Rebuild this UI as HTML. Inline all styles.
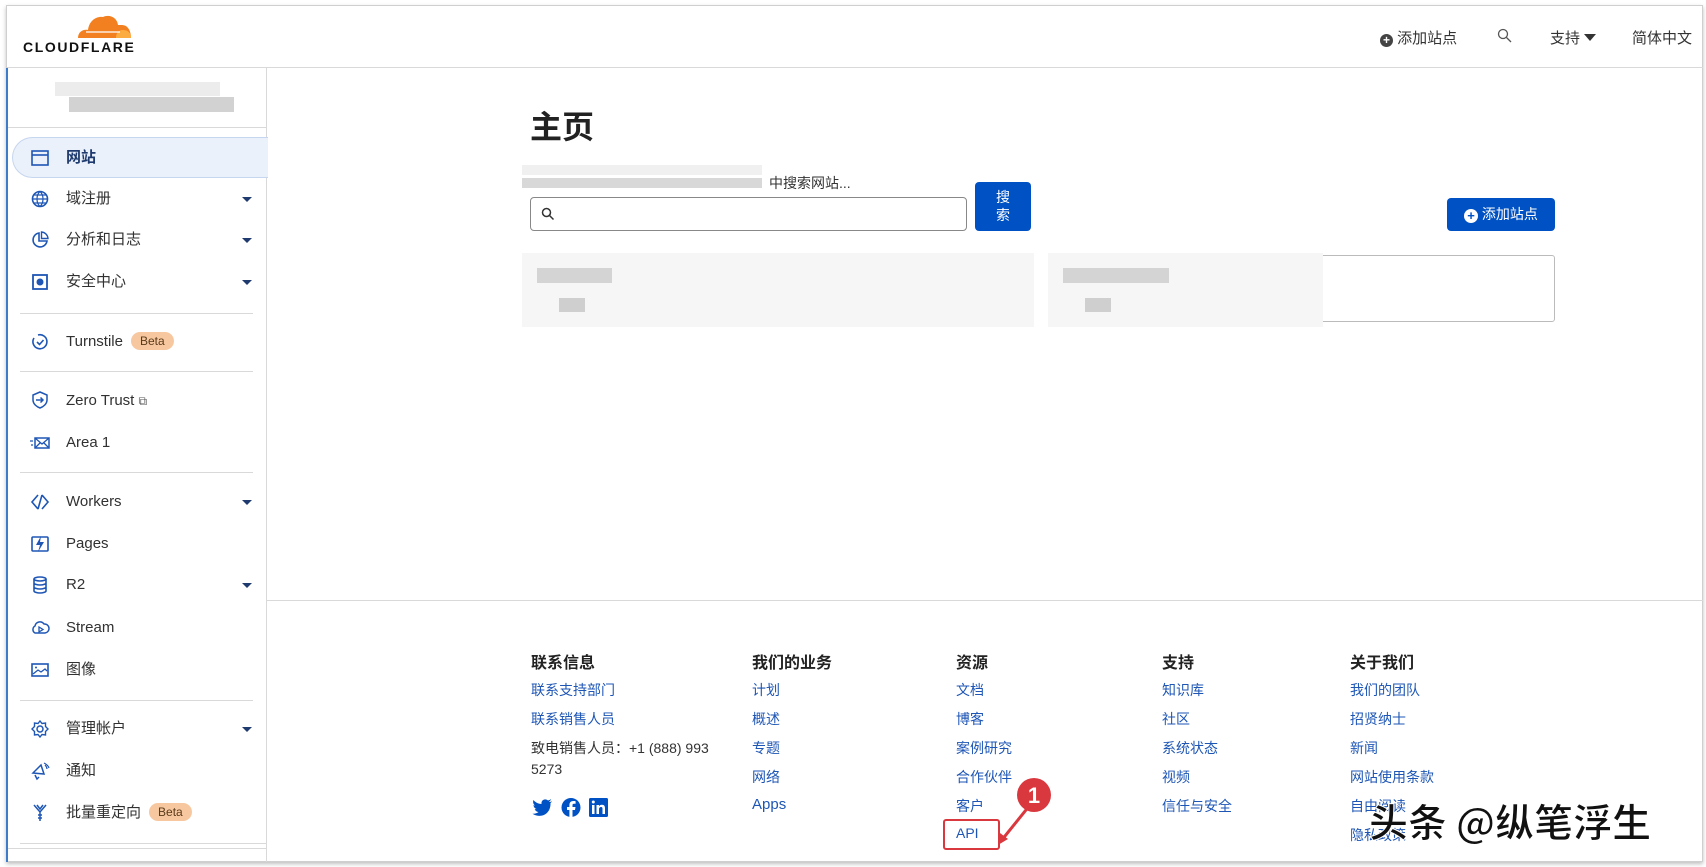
<!DOCTYPE html>
<html><head><meta charset="utf-8"><style>
*{margin:0;padding:0;box-sizing:border-box}
body{width:1706px;height:867px;background:#fff;position:relative;overflow:hidden;font-family:"Liberation Sans","Noto Sans CJK SC",sans-serif;color:#313131}
.a{position:absolute;white-space:nowrap}
.frame{position:absolute;left:6px;top:5px;width:1697px;height:857px;border:1px solid #cfcfcf;box-shadow:0 2px 4px rgba(0,0,0,.25)}
.hl{position:absolute;height:1px;background:#d9d9d9}
.nav{position:absolute;left:66px;font-size:15px;color:#313131;line-height:22px;height:22px}
.ic{position:absolute;left:30px;width:20px;height:20px}
.car{position:absolute;left:242px;width:0;height:0;border-left:5px solid transparent;border-right:5px solid transparent;border-top:5px solid #1e3a6e}
.beta{display:inline-block;background:#f7c8a0;color:#5a3a1a;font-size:12px;line-height:16px;border-radius:10px;padding:1px 9px;margin-left:8px;vertical-align:1px}
.fh{position:absolute;font-size:16px;font-weight:bold;color:#222}
.fl{position:absolute;font-size:14px;color:#1e56b5}
.blur{position:absolute;background:#e6e6e6}
</style></head><body>
<div class="frame"></div>
<!-- header -->
<svg class="a" style="left:76px;top:13px" width="56" height="26" viewBox="0 0 56 26"><path d="M2 25 C2 19 7 16 12 17 C13 8 20 3 27 4 C33 1 41 4 42 12 L46 12 C52 12 55 18 55 25 Z" fill="#f38020"/><path d="M40 25 C40 20 43 17 47 17 C52 17 55 20 55 25Z" fill="#fbad41"/><path d="M10 19 H44" stroke="#fff" stroke-width="1.3"/></svg>
<div class="a" style="left:23px;top:39px;font-size:14px;font-weight:bold;letter-spacing:1.6px;color:#111">CLOUDFLARE</div>
<div class="hl" style="left:7px;top:67px;width:1696px"></div>
<div class="a" style="left:1380px;top:27px;font-size:15px;color:#333"><span style="display:inline-block;width:13px;height:13px;border-radius:50%;background:#444;color:#fff;font-size:12px;line-height:12px;text-align:center;vertical-align:-1px;font-weight:bold">+</span> 添加站点</div>
<svg class="a" style="left:1497px;top:28px" width="16" height="16"><circle cx="6" cy="6" r="4.5" fill="none" stroke="#555" stroke-width="1.3"/><path d="M9.5 9.5 L14 14" stroke="#555" stroke-width="1.3"/></svg>
<div class="a" style="left:1550px;top:27px;font-size:15px;color:#333">支持 <span style="display:inline-block;border-left:6px solid transparent;border-right:6px solid transparent;border-top:7px solid #333;vertical-align:2px"></span></div>
<div class="a" style="left:1632px;top:27px;font-size:15px;color:#333">简体中文</div>
<!-- sidebar -->
<div class="a" style="left:6px;top:68px;width:2px;height:794px;background:#3d7cc9"></div>
<div class="a" style="left:266px;top:68px;width:1px;height:794px;background:#d9d9d9"></div>
<div class="blur" style="left:55px;top:82px;width:165px;height:14px;background:#ececec"></div>
<div class="blur" style="left:69px;top:97px;width:165px;height:15px;background:#d2d2d2"></div>
<div class="hl" style="left:8px;top:127px;width:258px"></div>
<div class="a" style="left:12px;top:137px;width:256px;height:41px;background:#eaf1fb;border:1px solid #c6d6ee;border-right:none;border-radius:21px 0 0 21px"></div>
<svg class="ic" style="top:148px" viewBox="0 0 20 20"><rect x="2" y="3" width="16" height="14" fill="none" stroke="#1e56b5" stroke-width="1.6"/><path d="M2 7 H18" stroke="#1e56b5" stroke-width="1.6"/></svg>
<div class="nav" style="top:147px;font-weight:bold;color:#1e3a6e">网站</div>
<svg class="ic" style="top:189px" viewBox="0 0 20 20"><circle cx="10" cy="10" r="7.5" fill="none" stroke="#1e56b5" stroke-width="1.6"/><path d="M2.5 10H17.5M10 2.5C6 6 6 14 10 17.5M10 2.5C14 6 14 14 10 17.5M4 6H16M4 14H16" stroke="#1e56b5" stroke-width="1.2" fill="none"/></svg>
<div class="nav" style="top:188px">域注册</div><div class="car" style="top:197px"></div>
<svg class="ic" style="top:230px" viewBox="0 0 20 20"><path d="M9 3 A7 7 0 1 0 17 11 H9 Z" fill="none" stroke="#1e56b5" stroke-width="1.6"/><path d="M11.5 2 A7 7 0 0 1 18 8.5 H11.5Z" fill="none" stroke="#1e56b5" stroke-width="1.4"/></svg>
<div class="nav" style="top:229px">分析和日志</div><div class="car" style="top:238px"></div>
<svg class="ic" style="top:272px" viewBox="0 0 20 20"><rect x="3" y="3" width="14" height="14" fill="none" stroke="#1e56b5" stroke-width="1.8"/><circle cx="10" cy="10" r="3.5" fill="#1e56b5"/></svg>
<div class="nav" style="top:271px">安全中心</div><div class="car" style="top:280px"></div>
<div class="hl" style="left:20px;top:313px;width:233px"></div>
<svg class="ic" style="top:332px" viewBox="0 0 20 20"><path d="M4 6 A7 7 0 1 0 8 3" fill="none" stroke="#1e56b5" stroke-width="1.6"/><path d="M7 10 L9.5 12.5 L13.5 8" fill="none" stroke="#1e56b5" stroke-width="1.6"/></svg>
<div class="nav" style="top:331px">Turnstile<span class="beta">Beta</span></div>
<div class="hl" style="left:20px;top:371px;width:233px"></div>
<svg class="ic" style="top:390px" viewBox="0 0 20 20"><path d="M10 2 L17 5 V10 C17 14 13 17 10 18 C7 17 3 14 3 10 V5 Z" fill="none" stroke="#1e56b5" stroke-width="1.5"/><path d="M6 10 H13 M10.5 7.5 L13 10 L10.5 12.5" fill="none" stroke="#1e56b5" stroke-width="1.5"/></svg>
<div class="nav" style="top:390px">Zero Trust <span style="font-size:12px;color:#555">⧉</span></div>
<svg class="ic" style="top:433px" viewBox="0 0 20 20"><rect x="5" y="5" width="14" height="10" fill="none" stroke="#1e56b5" stroke-width="1.5"/><path d="M5 5 L12 11 L19 5 M5 15 L10 10 M19 15 L14 10 M0 8H3M1 12H3" fill="none" stroke="#1e56b5" stroke-width="1.3"/></svg>
<div class="nav" style="top:432px">Area 1</div>
<div class="hl" style="left:20px;top:472px;width:233px"></div>
<svg class="ic" style="top:492px" viewBox="0 0 20 20"><path d="M8 3 L2 10 L8 17 M12 3 L18 10 L12 17 M12 3 L8 17" fill="none" stroke="#1e56b5" stroke-width="1.6"/></svg>
<div class="nav" style="top:491px">Workers</div><div class="car" style="top:500px"></div>
<svg class="ic" style="top:534px" viewBox="0 0 20 20"><rect x="2" y="3" width="16" height="14" rx="1" fill="none" stroke="#1e56b5" stroke-width="1.6"/><path d="M11 2 L6 11 H10 L8 18 L14 8 H10 Z" fill="#1e56b5"/></svg>
<div class="nav" style="top:533px">Pages</div>
<svg class="ic" style="top:575px" viewBox="0 0 20 20"><ellipse cx="10" cy="4" rx="6" ry="2" fill="none" stroke="#1e56b5" stroke-width="1.6"/><path d="M4 4V16C4 17 7 18 10 18S16 17 16 16V4M4 8C4 9 7 10 10 10S16 9 16 8M4 12C4 13 7 14 10 14S16 13 16 12" fill="none" stroke="#1e56b5" stroke-width="1.6"/></svg>
<div class="nav" style="top:574px">R2</div><div class="car" style="top:583px"></div>
<svg class="ic" style="top:618px" viewBox="0 0 20 20"><path d="M5 15 A4 4 0 0 1 5 8 A5 5 0 0 1 14 6 A4.5 4.5 0 0 1 15 15 Z" fill="none" stroke="#1e56b5" stroke-width="1.5"/><path d="M9 9 L13 11.5 L9 14 Z" fill="none" stroke="#1e56b5" stroke-width="1.3"/></svg>
<div class="nav" style="top:617px">Stream</div>
<svg class="ic" style="top:660px" viewBox="0 0 20 20"><rect x="2" y="4" width="16" height="12" fill="none" stroke="#1e56b5" stroke-width="1.6"/><path d="M3 14 L8 10 L11 12 L15 9 L17 11" fill="none" stroke="#1e56b5" stroke-width="1.3"/><circle cx="6" cy="7.5" r="1" fill="#1e56b5"/></svg>
<div class="nav" style="top:659px">图像</div>
<div class="hl" style="left:20px;top:700px;width:233px"></div>
<svg class="ic" style="top:719px" viewBox="0 0 20 20"><circle cx="10" cy="10" r="3" fill="none" stroke="#1e56b5" stroke-width="1.5"/><path d="M10 2 L12 4.5 L15.5 4 L15.5 7.5 L18 10 L15.5 12.5 L15.5 16 L12 15.5 L10 18 L8 15.5 L4.5 16 L4.5 12.5 L2 10 L4.5 7.5 L4.5 4 L8 4.5 Z" fill="none" stroke="#1e56b5" stroke-width="1.4"/></svg>
<div class="nav" style="top:718px">管理帐户</div><div class="car" style="top:727px"></div>
<svg class="ic" style="top:761px" viewBox="0 0 20 20"><path d="M3 12 L11 4 L14 13 Z M5 14 L7 18 L9 16" fill="none" stroke="#1e56b5" stroke-width="1.5"/><path d="M15 4 Q17 6 17 8 M14 2 Q18 4 19 7" fill="none" stroke="#1e56b5" stroke-width="1.2"/></svg>
<div class="nav" style="top:760px">通知</div>
<svg class="ic" style="top:803px" viewBox="0 0 20 20"><path d="M4 2 L10 9 L16 2 M7 2 L10 6 L13 2 M10 9 V18 M8 12 H12 M8 15 H12" fill="none" stroke="#1e56b5" stroke-width="1.5"/></svg>
<div class="nav" style="top:802px">批量重定向<span class="beta">Beta</span></div>
<div class="hl" style="left:20px;top:843px;width:246px"></div>
<div class="hl" style="left:8px;top:848px;width:258px"></div>
<!-- main -->
<div class="a" style="left:530px;top:102px;font-size:32px;font-weight:bold;color:#222">主页</div>
<div class="blur" style="left:522px;top:165px;width:240px;height:10px;background:#f0f0f0"></div>
<div class="blur" style="left:522px;top:178px;width:240px;height:10px;background:#d8d8d8"></div>
<div class="a" style="left:769px;top:173px;font-size:14px;color:#333">中搜索网站...</div>
<div class="a" style="left:530px;top:197px;width:437px;height:34px;border:1px solid #888;border-radius:4px"></div>
<svg class="a" style="left:541px;top:207px" width="14" height="14"><circle cx="5.5" cy="5.5" r="4" fill="none" stroke="#333" stroke-width="1.5"/><path d="M8.5 8.5 L12.5 12.5" stroke="#333" stroke-width="1.5"/></svg>
<div class="a" style="left:975px;top:182px;width:56px;height:49px;background:#0051c3;border-radius:4px;color:#fff;font-size:14px;text-align:center;line-height:18px;padding-top:6px;white-space:normal">搜<br>索</div>
<div class="a" style="left:1447px;top:198px;width:108px;height:33px;background:#0051c3;border-radius:4px;color:#fff;font-size:14px;line-height:33px;text-align:center"><span style="display:inline-block;width:14px;height:14px;border-radius:50%;background:#fff;color:#0051c3;font-size:13px;line-height:13px;font-weight:bold;vertical-align:-1px">+</span> 添加站点</div>
<div class="a" style="left:522px;top:253px;width:512px;height:74px;background:#f6f6f6"></div>
<div class="a" style="left:537px;top:268px;width:75px;height:15px;background:#d4d4d4"></div>
<div class="a" style="left:559px;top:298px;width:26px;height:14px;background:#cfcfcf"></div>
<div class="a" style="left:1048px;top:255px;width:507px;height:67px;border:1px solid #bbb;border-radius:3px"></div>
<div class="a" style="left:1048px;top:253px;width:275px;height:74px;background:#f6f6f6"></div>
<div class="a" style="left:1063px;top:268px;width:106px;height:15px;background:#d4d4d4"></div>
<div class="a" style="left:1085px;top:298px;width:26px;height:14px;background:#cfcfcf"></div>
<div class="hl" style="left:267px;top:600px;width:1436px"></div>
<!-- footer -->
<div class="fh" style="left:531px;top:649px">联系信息</div>
<div class="fl" style="left:531px;top:680px">联系支持部门</div>
<div class="fl" style="left:531px;top:709px">联系销售人员</div>
<div class="a" style="left:531px;top:738px;font-size:14px;color:#333;line-height:21px">致电销售人员：+1 (888) 993<br>5273</div>
<svg class="a" style="left:532px;top:797px" width="80" height="22" viewBox="0 0 80 22"><path d="M20 4 C19 5 18 5 17 5 C18 4 19 3 19 2 C18 3 17 3 16 3.5 C13 1 9 3 9.5 7 C6 7 3 5 1.5 3 C0.5 5 1.5 7.5 3 8.5 C2.5 8.5 2 8.3 1.5 8 C1.5 10 3 11.5 4.5 12 C4 12.2 3.2 12.2 2.7 12 C3.2 13.8 4.8 14.8 6.5 15 C5 16.3 2.5 17 0.5 16.7 C9 22 19 17 18.5 6 C19.2 5.5 19.7 4.8 20 4 Z" fill="#0051c3"/><circle cx="39" cy="10.5" r="9.5" fill="#0051c3"/><path d="M40.5 21 V13 H43 L43.5 10 H40.5 V8.3 C40.5 7.4 40.8 6.8 42 6.8 H43.6 V4.2 C43 4.1 42.2 4 41.3 4 C38.9 4 37.4 5.4 37.4 8 V10 H35 V13 H37.4 V21 Z" fill="#fff"/><rect x="57" y="1" width="19" height="19" rx="1.5" fill="#0051c3"/><rect x="60" y="8" width="2.5" height="9" fill="#fff"/><circle cx="61.3" cy="5" r="1.5" fill="#fff"/><path d="M64.5 8 H67 V9.3 C67.5 8.4 68.6 7.8 70 7.8 C72.4 7.8 73 9.3 73 11.5 V17 H70.5 V12 C70.5 10.8 70.2 10 69.1 10 C67.8 10 67 10.8 67 12.3 V17 H64.5 Z" fill="#fff"/></svg>
<div class="fh" style="left:752px;top:649px">我们的业务</div>
<div class="fl" style="left:752px;top:680px">计划</div>
<div class="fl" style="left:752px;top:709px">概述</div>
<div class="fl" style="left:752px;top:738px">专题</div>
<div class="fl" style="left:752px;top:767px">网络</div>
<div class="fl" style="left:752px;top:796px;font-size:15px">Apps</div>
<div class="fh" style="left:956px;top:649px">资源</div>
<div class="fl" style="left:956px;top:680px">文档</div>
<div class="fl" style="left:956px;top:709px">博客</div>
<div class="fl" style="left:956px;top:738px">案例研究</div>
<div class="fl" style="left:956px;top:767px">合作伙伴</div>
<div class="fl" style="left:956px;top:796px">客户</div>
<div class="fl" style="left:956px;top:825px">API</div>
<div class="a" style="left:943px;top:819px;width:57px;height:31px;border:2px solid #d9383f;border-radius:3px"></div>
<svg class="a" style="left:990px;top:770px" width="70" height="80"><path d="M44 30 L11 71" stroke="#d9383f" stroke-width="3"/><path d="M8 75 L10 63 L18 69 Z" fill="#d9383f"/><circle cx="44" cy="25" r="17" fill="#d9383f"/><text x="44" y="33" font-size="22" font-weight="bold" fill="#fff" text-anchor="middle" font-family="Liberation Sans,sans-serif">1</text></svg>
<div class="fh" style="left:1162px;top:649px">支持</div>
<div class="fl" style="left:1162px;top:680px">知识库</div>
<div class="fl" style="left:1162px;top:709px">社区</div>
<div class="fl" style="left:1162px;top:738px">系统状态</div>
<div class="fl" style="left:1162px;top:767px">视频</div>
<div class="fl" style="left:1162px;top:796px">信任与安全</div>
<div class="fh" style="left:1350px;top:649px">关于我们</div>
<div class="fl" style="left:1350px;top:680px">我们的团队</div>
<div class="fl" style="left:1350px;top:709px">招贤纳士</div>
<div class="fl" style="left:1350px;top:738px">新闻</div>
<div class="fl" style="left:1350px;top:767px">网站使用条款</div>
<div class="fl" style="left:1350px;top:796px">自由阅读</div>
<div class="fl" style="left:1350px;top:825px">隐私政策</div>
<div class="a" style="left:1369px;top:793px;font-size:39px;font-weight:bold;color:#111;-webkit-text-stroke:1px #fff;font-family:'Noto Sans CJK SC',sans-serif;letter-spacing:0px">头条 @纵笔浮生</div>
</body></html>
